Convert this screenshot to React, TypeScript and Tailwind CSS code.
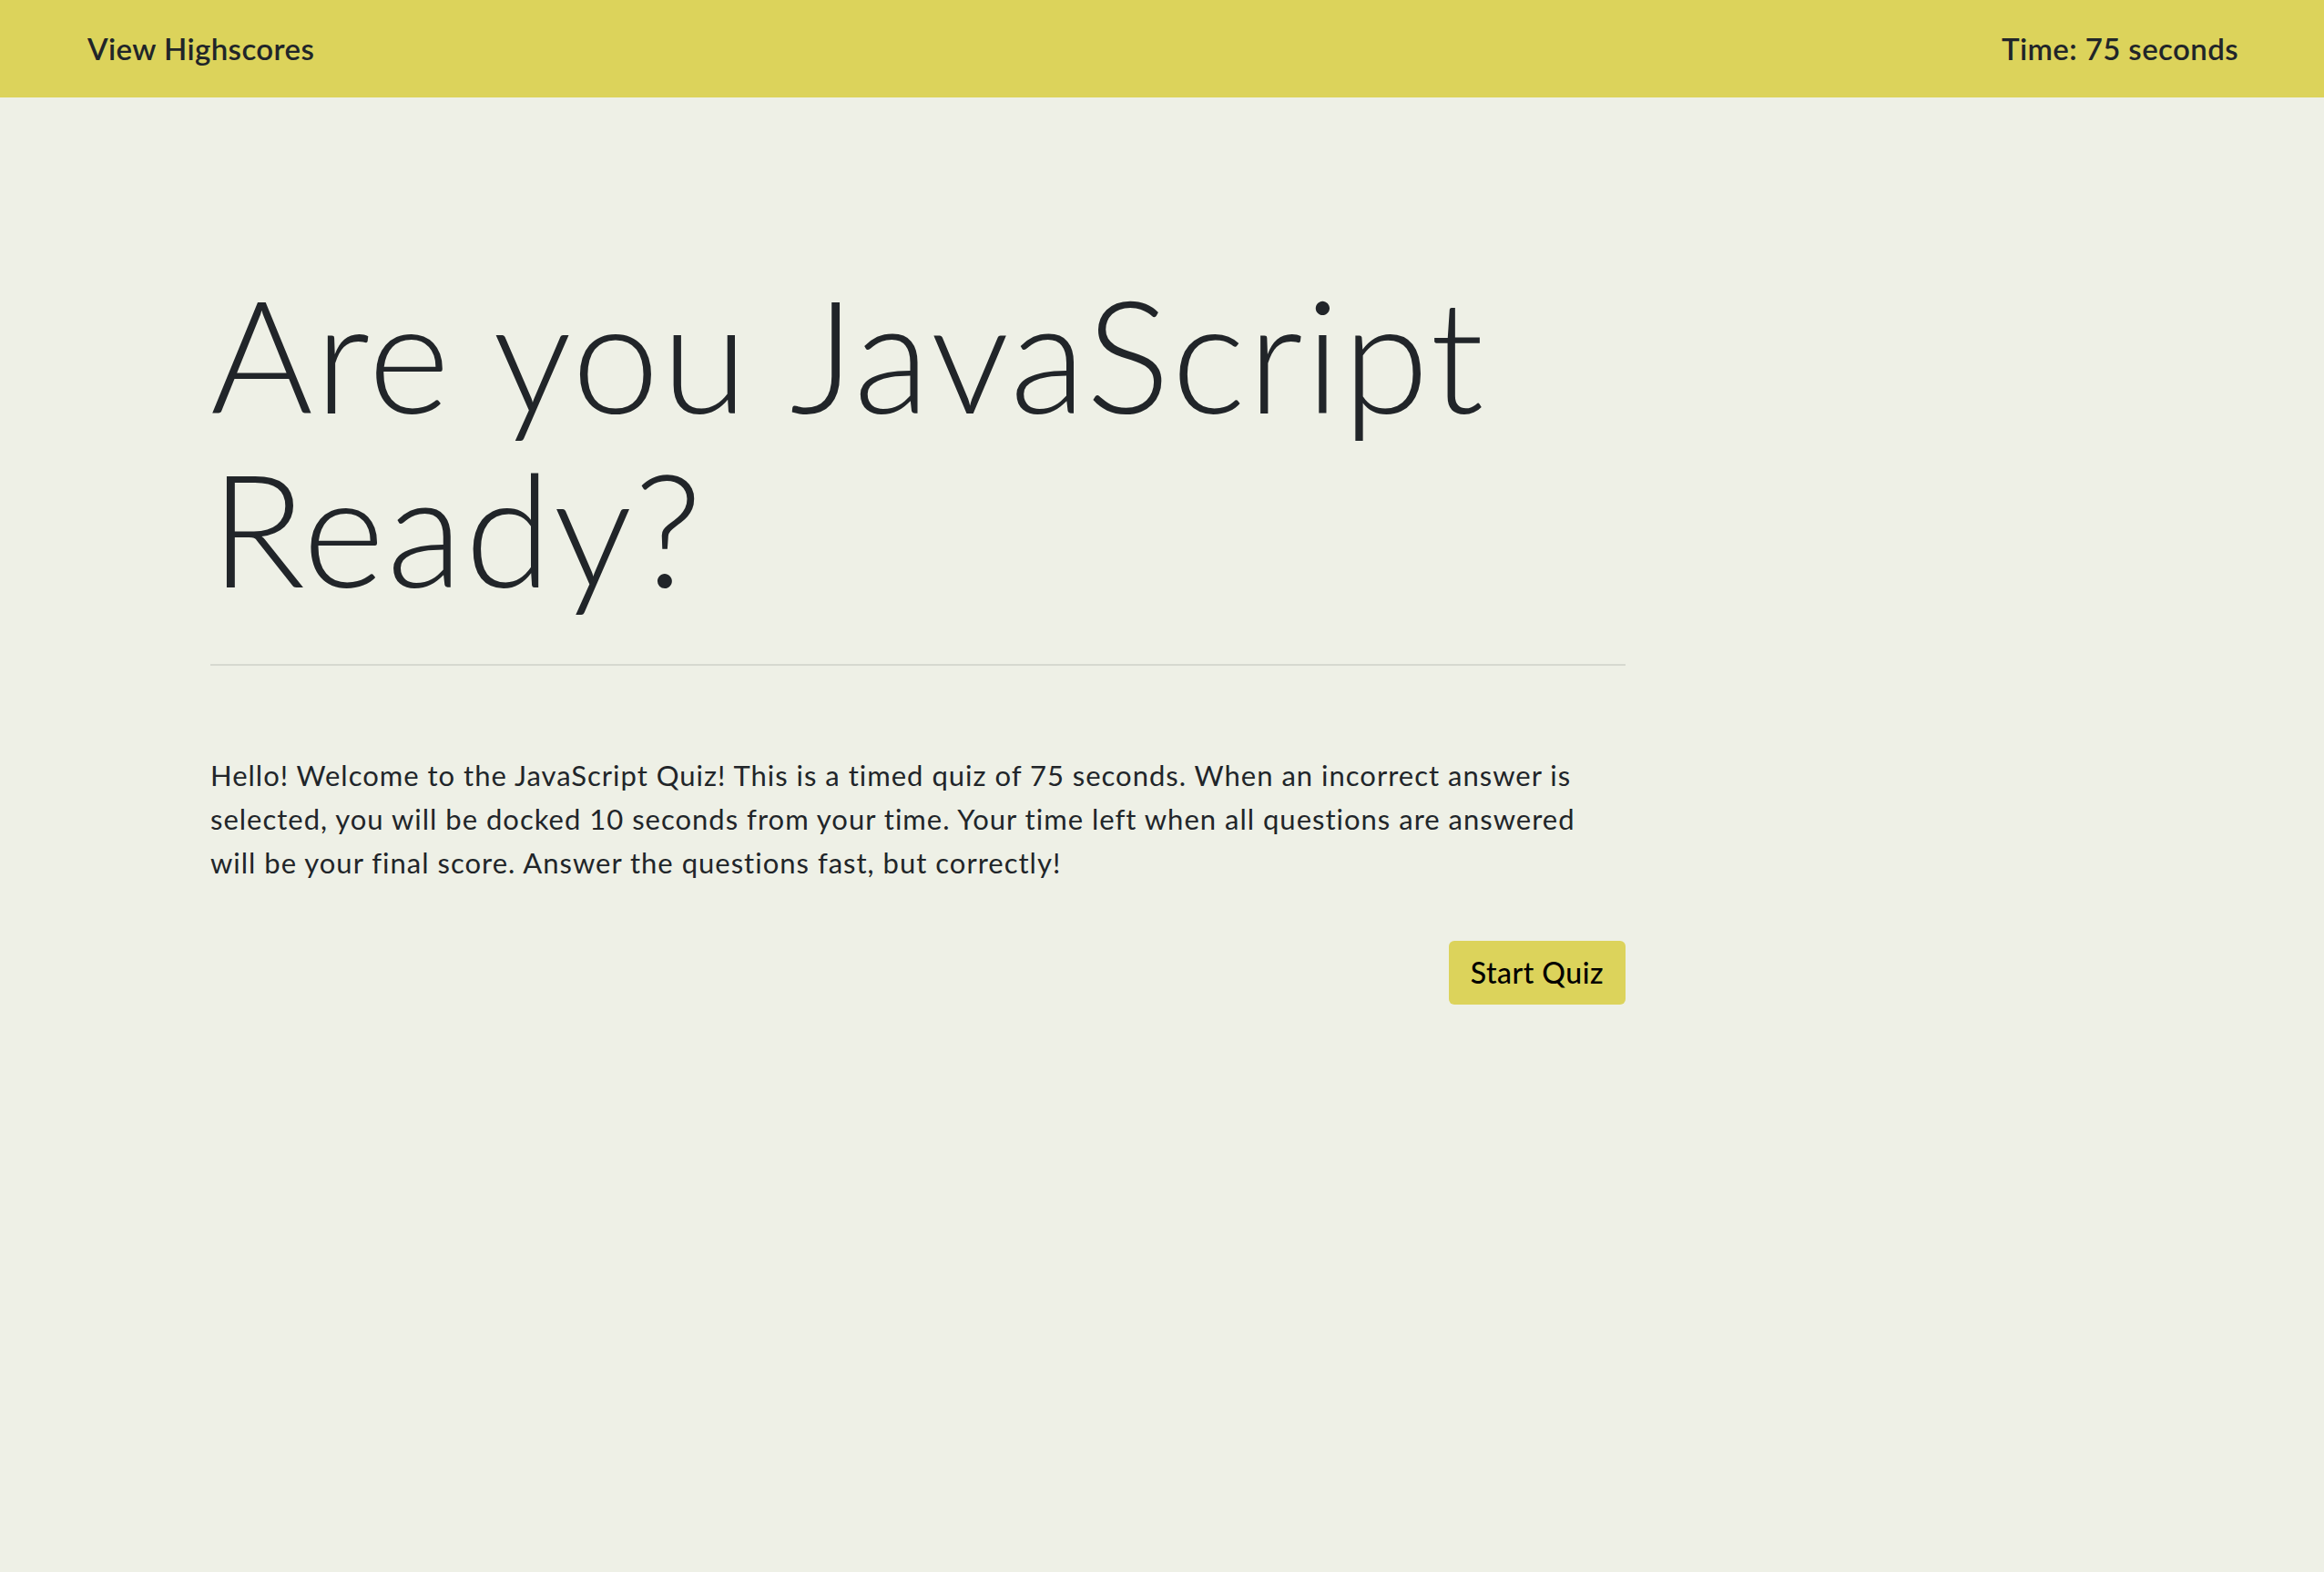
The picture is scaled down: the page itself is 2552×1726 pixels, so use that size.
import React from 'react';

export default function App() {
  return (
    <div className="min-h-screen w-full bg-[#eef0e6] text-[#212529] font-['Lato','Noto_Sans',sans-serif]">
      {/* Header */}
      <header className="h-[107px] bg-[#dcd35b] flex items-center justify-between pl-[96px] pr-[94px]">
        <a className="text-[33px] font-semibold tracking-[0.4px] cursor-pointer">View Highscores</a>
        <span className="text-[33px] font-semibold tracking-[0.4px]">Time: 75 seconds</span>
      </header>

      {/* Intro */}
      <main className="pl-[231px] pt-[185px]">
        <div className="w-[1554px]">
          <h1 className="text-[172px] leading-[191px] font-light tracking-[2.5px]">
            Are you JavaScript Ready?
          </h1>
          <hr className="mt-[55px] border-t-2 border-[#d6d9d0]" />
          <p className="mt-[96px] text-[31px] leading-[48px] tracking-[1px]">
            Hello! Welcome to the JavaScript Quiz! This is a timed quiz of 75 seconds. When an incorrect answer is
            <br />
            selected, you will be docked 10 seconds from your time. Your time left when all questions are answered
            <br />
            will be your final score. Answer the questions fast, but correctly!
          </p>
          <div className="flex justify-end mt-[62px]">
            <button className="h-[70px] px-[24px] bg-[#dcd35b] rounded-[6px] text-[32px] tracking-[0.5px] text-black font-medium">
              Start Quiz
            </button>
          </div>
        </div>
      </main>
    </div>
  );
}
